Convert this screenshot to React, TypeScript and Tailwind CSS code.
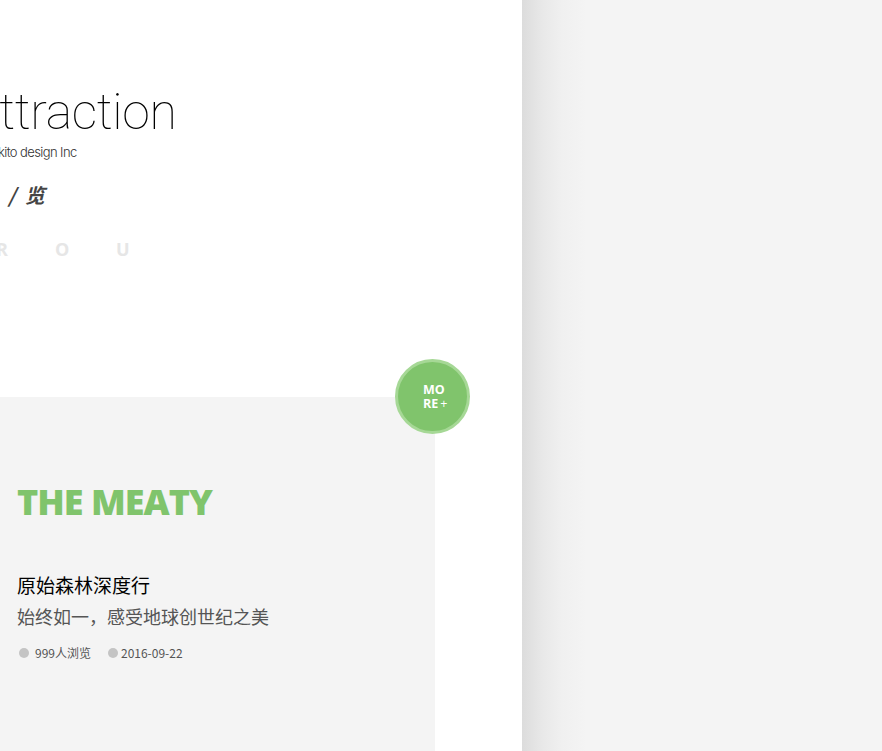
import React from "react";

export default function App() {
  return (
    <div className="flex w-[882px] h-[751px] overflow-hidden bg-white" style={{ fontFamily: "Roboto, 'Noto Sans CJK SC', sans-serif" }}>
      <div className="relative w-[522px] h-full flex flex-col bg-white">
        <div className="h-[397px] flex flex-col overflow-hidden">
          <div className="mt-[82px] ml-[-30px] text-[50px] leading-[60px] font-[100] text-black tracking-[-0.3px] whitespace-nowrap">Attraction</div>
          <div className="ml-[-2px] mt-[3px] text-[13px] leading-[14px] font-[300] text-[#333] tracking-[-0.6px] whitespace-nowrap" style={{ fontFamily: "Inter, sans-serif" }}>kito design Inc</div>
          <div className="ml-[8px] mt-[24px] text-[20px] leading-[24px] font-bold italic text-[#444] whitespace-nowrap" style={{ fontFamily: "'Noto Sans CJK SC', sans-serif" }}>/&nbsp;&nbsp;览</div>
          <div className="ml-[-4px] mt-[32px] flex text-[18px] leading-[20px] font-bold text-[#e6e6e6]" style={{ fontFamily: "'Open Sans', sans-serif" }}>
            <span className="w-[59px]">R</span>
            <span className="w-[61px]">O</span>
            <span>U</span>
          </div>
        </div>
        <div className="w-[435px] flex-1 bg-[#f4f4f4] flex flex-col pl-[17px]">
          <div className="mt-[83px] text-[36px] leading-[44px] font-[800] text-[#80c46c] tracking-[-1px]" style={{ fontFamily: "'Open Sans', sans-serif" }}>THE MEATY</div>
          <div className="mt-[47px] text-[19px] leading-[28px] text-black" style={{ fontFamily: "'Noto Sans CJK SC', sans-serif" }}>原始森林深度行</div>
          <div className="mt-[3px] text-[18px] leading-[28px] text-[#555]" style={{ fontFamily: "'Noto Sans CJK SC', sans-serif" }}>始终如一，感受地球创世纪之美</div>
          <div className="mt-[15px] flex items-center text-[12px] leading-[16px] text-[#555]" style={{ fontFamily: "'Noto Sans CJK SC', sans-serif" }}>
            <span className="ml-[2px] w-[10px] h-[10px] rounded-full bg-[#c4c4c4]"></span>
            <span className="ml-[6px]">999人浏览</span>
            <span className="ml-[17px] w-[10px] h-[10px] rounded-full bg-[#c4c4c4]"></span>
            <span className="ml-[3px]">2016-09-22</span>
          </div>
        </div>
        <div className="absolute left-[395px] top-[359px] w-[75px] h-[75px] rounded-full bg-[#80c46c] border-[3px] border-[#a6d896] flex flex-col items-start justify-center pl-[25px] text-white font-bold text-[12.5px] leading-[14px]" style={{ fontFamily: "'Open Sans', sans-serif" }}>
          <span>MO</span>
          <span>RE<span className="font-normal ml-[2px]">+</span></span>
        </div>
      </div>
      <div className="flex-1 h-full bg-[linear-gradient(to_right,#dcdcdc_0px,#e8e8e8_20px,#f0f0f0_40px,#f4f4f4_65px)]"></div>
    </div>
  );
}
